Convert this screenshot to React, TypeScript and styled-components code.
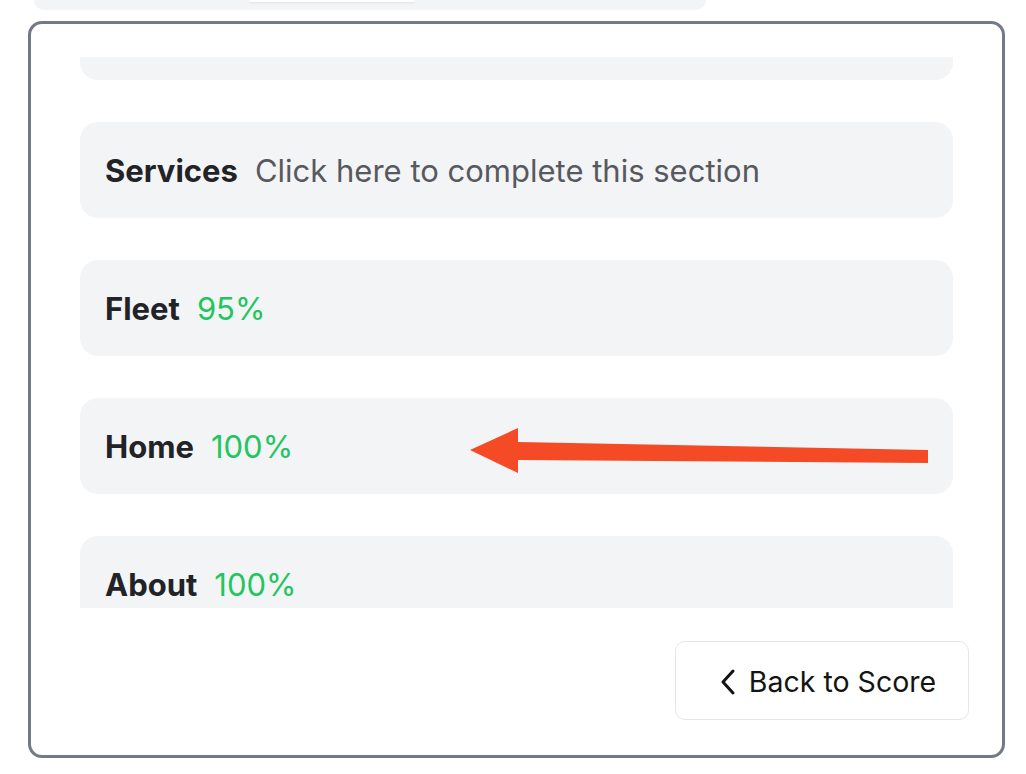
import React from "react";
import styled, { createGlobalStyle } from "styled-components";

const Global = createGlobalStyle`
  html, body { margin: 0; padding: 0; background: #ffffff; }
  body { font-family: Inter, "Noto Sans", "Liberation Sans", sans-serif; -webkit-font-smoothing: antialiased; }
  * { box-sizing: border-box; }
`;

const Page = styled.div`
  width: 1026px;
  height: 774px;
  overflow: hidden;
  position: relative;
  display: flex;
  flex-direction: column;
`;

const TopBar = styled.div`
  margin-left: 34px;
  width: 672px;
  height: 10px;
  background: #f3f4f6;
  border-radius: 0 0 12px 12px;
  position: relative;
  display: flex;
`;

const TopTab = styled.div`
  margin-left: 215px;
  width: 166px;
  height: 2px;
  background: #ffffff;
  border-radius: 0 0 6px 6px;
  box-shadow: 0 1px 2px rgba(0, 0, 0, 0.08);
`;

const Card = styled.div`
  margin: 11px 0 0 28px;
  width: 977px;
  height: 737px;
  border: 3px solid #737987;
  border-radius: 14px;
  background: #ffffff;
  padding: 33px 49px 0 49px;
  display: flex;
  flex-direction: column;
  position: relative;
`;

const Viewport = styled.div`
  height: 551px;
  overflow: hidden;
  position: relative;
`;

const List = styled.div`
  display: flex;
  flex-direction: column;
  gap: 42px;
  margin-top: -73px;
`;

const Item = styled.div`
  flex: none;
  height: 96px;
  border-radius: 18px;
  background: #f3f4f6;
  display: flex;
  align-items: center;
  padding: 0 25px;
  font-size: 31px;
`;

const Label = styled.span`
  font-weight: 700;
  color: #222326;
  margin-right: 17px;
`;

const Value = styled.span<{ $tone: "muted" | "good" }>`
  font-weight: 400;
  color: ${(p) => (p.$tone === "good" ? "#22c55e" : "#57595e")};
`;

const Footer = styled.div`
  display: flex;
  justify-content: flex-end;
  margin: 33px -16px 0 0;
`;

const BackButton = styled.button`
  width: 294px;
  height: 79px;
  border: 1.5px solid #e5e6e8;
  border-radius: 10px;
  background: #ffffff;
  display: flex;
  align-items: center;
  justify-content: center;
  gap: 13px;
  font-family: inherit;
  font-size: 28.5px;
  color: #141414;
  padding: 2px 0 0 12px;
  cursor: pointer;
`;

const ArrowOverlay = styled.svg`
  position: absolute;
  left: 431px;
  top: 396px;
  pointer-events: none;
`;

const items: { label: string; value: string; tone: "muted" | "good" }[] = [
  { label: "Contact", value: "100%", tone: "good" },
  { label: "Services", value: "Click here to complete this section", tone: "muted" },
  { label: "Fleet", value: "95%", tone: "good" },
  { label: "Home", value: "100%", tone: "good" },
  { label: "About", value: "100%", tone: "good" },
];

export default function App() {
  return (
    <Page>
      <Global />
      <TopBar>
        <TopTab />
      </TopBar>
      <Card>
        <Viewport>
          <List>
            {items.map((it) => (
              <Item key={it.label}>
                <Label>{it.label}</Label>
                <Value $tone={it.tone}>{it.value}</Value>
              </Item>
            ))}
          </List>
        </Viewport>
        <Footer>
          <BackButton>
            <svg width="16" height="26" viewBox="0 0 16 26" fill="none">
              <path d="M13 2 L3 13 L13 24" stroke="#141414" strokeWidth="3" strokeLinecap="round" strokeLinejoin="round" />
            </svg>
            Back to Score
          </BackButton>
        </Footer>
        <ArrowOverlay width="475" height="60" viewBox="0 0 475 60">
          <polygon
            points="8,30 56,8 56,22 466,30 466,43 56,40 56,53"
            fill="#f44a25"
          />
        </ArrowOverlay>
      </Card>
    </Page>
  );
}
